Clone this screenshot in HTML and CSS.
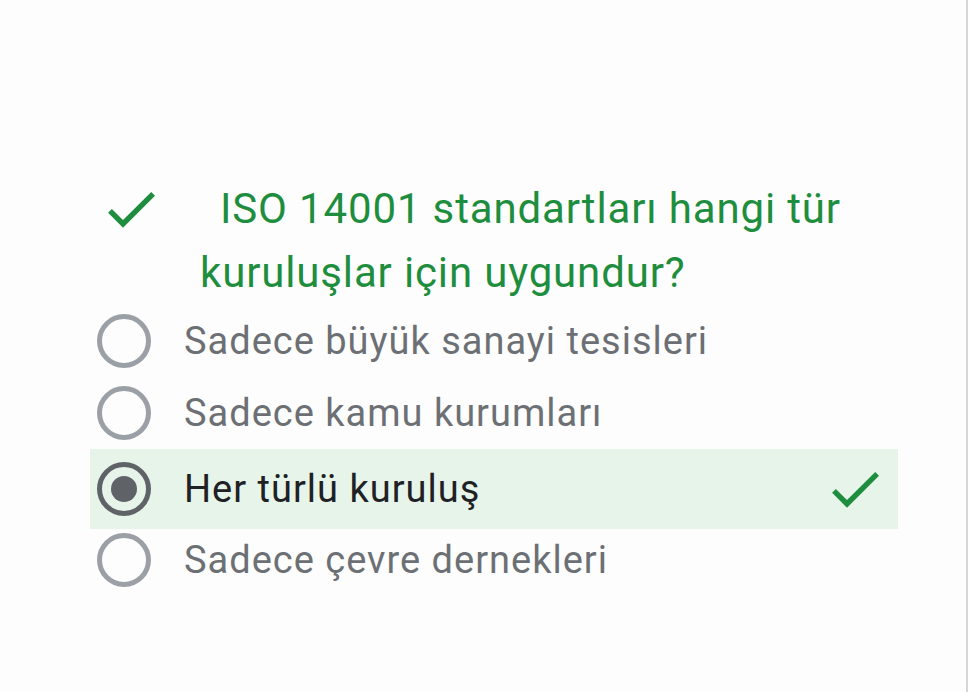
FILE: index.html
```html
<!DOCTYPE html>
<html lang="tr">
<head>
<meta charset="utf-8">
<link rel="stylesheet" href="styles.css">
</head>
<body>
<div class="page">
  <div class="quiz">
    <div class="question">
      <svg class="q-check" viewBox="0 0 24 24" width="64" height="64"><path d="M9 16.17L4.83 12l-1.42 1.41L9 19 21 7l-1.41-1.41z"/></svg>
      <div class="q-text">ISO 14001 standartları hangi tür kuruluşlar için uygundur?</div>
    </div>
    <div class="options">
      <div class="opt">
        <span class="radio"></span>
        <span class="label">Sadece büyük sanayi tesisleri</span>
      </div>
      <div class="opt">
        <span class="radio"></span>
        <span class="label">Sadece kamu kurumları</span>
      </div>
      <div class="opt opt-selected">
        <span class="radio radio-on"><span class="dot"></span></span>
        <span class="label">Her türlü kuruluş</span>
        <svg class="a-check" viewBox="0 0 24 24" width="64" height="64"><path d="M9 16.17L4.83 12l-1.42 1.41L9 19 21 7l-1.41-1.41z"/></svg>
      </div>
      <div class="opt opt-last">
        <span class="radio"></span>
        <span class="label">Sadece çevre dernekleri</span>
      </div>
    </div>
  </div>
  <div class="edge"></div>
</div>
</body>
</html>
```
FILE: styles.css
```css
html, body {
  margin: 0;
  padding: 0;
  background: #fdfdfd;
}
.page {
  display: flex;
  width: 968px;
  height: 692px;
  font-family: Roboto, "Noto Sans", sans-serif;
}
.quiz {
  flex: 1;
  padding-top: 177px;
  padding-left: 90px;
  padding-right: 68px;
}
.edge {
  width: 2px;
  background: #d6d6d6;
}
.question {
  display: flex;
  align-items: flex-start;
}
.q-check {
  fill: #1e8e3e;
  margin-left: 9px;
  flex: none;
}
.q-text {
  margin-left: 37px;
  width: 680px;
  color: #1e8e3e;
  font-size: 42px;
  line-height: 64px;
  letter-spacing: 0.85px;
  text-indent: 20px;
}
.options {
  display: flex;
  flex-direction: column;
}
.opt {
  display: flex;
  align-items: center;
  height: 72px;
  padding-left: 7px;
  padding-right: 11px;
}
.opt-selected {
  height: 80px;
  background: #e6f4ea;
}
.opt-last {
  height: 62px;
}
.radio {
  box-sizing: border-box;
  width: 54px;
  height: 54px;
  border: 5px solid #9aa0a6;
  border-radius: 50%;
  display: flex;
  align-items: center;
  justify-content: center;
  flex: none;
}
.radio-on {
  border-color: #5f6368;
}
.dot {
  width: 26px;
  height: 26px;
  border-radius: 50%;
  background: #5f6368;
}
.label {
  margin-left: 33px;
  font-size: 38px;
  letter-spacing: 1px;
  color: #6c7075;
  flex: 1;
}
.opt-selected .label {
  color: #202124;
}
.a-check {
  fill: #1e8e3e;
  flex: none;
}
```
